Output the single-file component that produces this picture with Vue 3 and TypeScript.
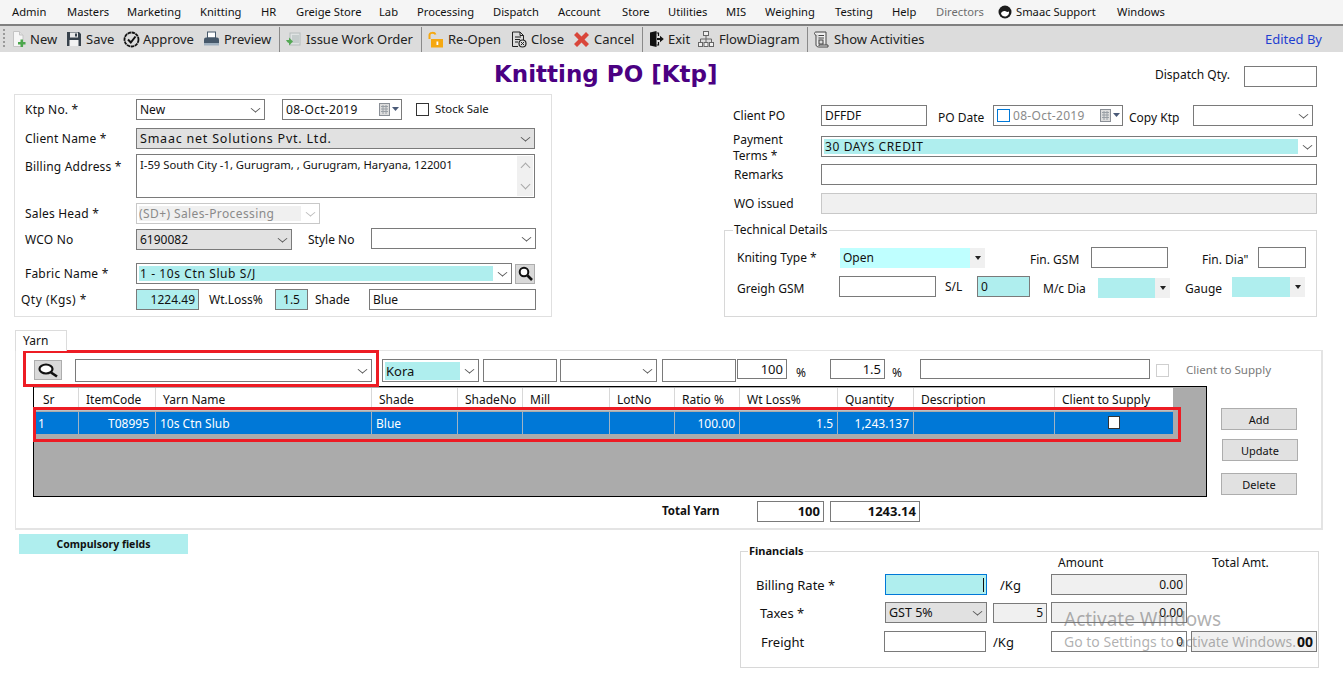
<script setup lang="ts">
const menus: { label: string; w: number; muted?: boolean }[] = [
  { label: 'Admin', w: 55 }, { label: 'Masters', w: 60 }, { label: 'Marketing', w: 73 },
  { label: 'Knitting', w: 61 }, { label: 'HR', w: 35 }, { label: 'Greige Store', w: 83 },
  { label: 'Lab', w: 38 }, { label: 'Processing', w: 76 }, { label: 'Dispatch', w: 65 },
  { label: 'Account', w: 64 }, { label: 'Store', w: 46 }, { label: 'Utilities', w: 58 },
  { label: 'MIS', w: 39 }, { label: 'Weighing', w: 70 }, { label: 'Testing', w: 57 },
  { label: 'Help', w: 44 }, { label: 'Directors', w: 62, muted: true },
]
const cols = ['Sr', 'ItemCode', 'Yarn Name', 'Shade', 'ShadeNo', 'Mill', 'LotNo', 'Ratio %', 'Wt Loss%', 'Quantity', 'Description', 'Client to Supply']
</script>

<template>
  <div class="page">
    <nav class="menubar">
      <span v-for="m in menus" :key="m.label" class="menu" :class="{ muted: m.muted }" :style="{ width: m.w + 'px' }">{{ m.label }}</span>
      <svg class="support-ico" width="14" height="14" viewBox="0 0 14 14"><circle cx="7" cy="7" r="6.500" fill="#1c1c1c"/><path d="M3 8.500C3.500 6.500 6 5.500 8 6.500C9 7 10 7 11 6.500C11.500 9 9.500 11.500 7 11.500C5 11.500 3.500 10.300 3 8.500Z" fill="#fff"/></svg>
      <span class="menu support">Smaac Support</span>
      <span class="menu">Windows</span>
    </nav>

    <div class="toolbar">
      <span class="grip"></span>
      <span class="tool t-new">
        <svg width="16" height="18" viewBox="0 0 16 18"><path d="M2.500 1.500H8.500L12 5V16.500H2.500Z" fill="#f6f6f6" stroke="#c4c4c4"/><path d="M8.500 1.500V5H12" fill="#e2e2e2" stroke="#c4c4c4"/><path d="M7 12H9.500V9.500H12V12H14.500V14.500H12V17H9.500V14.500H7Z" fill="#4ca64c"/></svg>New
      </span>
      <span class="tool t-save">
        <svg width="16" height="16" viewBox="0 0 16 16"><path d="M1 1H13L15 3V15H1Z" fill="#38424c"/><rect x="4" y="1.500" width="8" height="5" fill="#e8e8e8"/><rect x="9" y="2.500" width="2" height="3" fill="#38424c"/><rect x="3.500" y="9" width="9" height="6" fill="#f2f2f2"/></svg>Save
      </span>
      <span class="tool t-approve">
        <svg width="17" height="17" viewBox="0 0 17 17"><circle cx="8.500" cy="8.500" r="7" fill="none" stroke="#111" stroke-width="1.800" stroke-dasharray="3.500 .6"/><path d="M5 8.500L7.800 11.500L12.500 5.500" fill="none" stroke="#111" stroke-width="2"/></svg>Approve
      </span>
      <span class="tool t-preview">
        <svg width="17" height="16" viewBox="0 0 17 16"><rect x="4.500" y="1" width="8" height="6" fill="#fff" stroke="#46586a"/><path d="M1 8.500Q1 6.500 3 6.500H14Q16 6.500 16 8.500V12H1Z" fill="#46586a"/><rect x="1" y="12" width="15" height="2.500" fill="#9fb0bf"/></svg>Preview
      </span>
      <span class="sep s1"></span>
      <span class="tool t-issue">
        <svg width="17" height="17" viewBox="0 0 17 17"><rect x="5" y="2" width="10" height="12" fill="#dfe3e3" stroke="#b5bcbc"/><rect x="7" y="4" width="7" height="8" fill="#c5cccc"/><path d="M1 9H4V6.500L8 10.500L4 14.500V12C3 12 2 11 1 9Z" fill="#55a855"/></svg>Issue Work Order
      </span>
      <span class="sep s2"></span>
      <span class="tool t-open">
        <svg width="17" height="17" viewBox="0 0 17 17"><path d="M2.500 8V4C2.500 1.500 7.500 1 8.500 3.500" fill="none" stroke="#f5a811" stroke-width="2"/><rect x="4" y="8" width="12" height="8.500" fill="#f5a811"/><rect x="9.500" y="10.500" width="1.800" height="3.500" fill="#fff"/></svg>Re-Open
      </span>
      <span class="tool t-close">
        <svg width="16" height="17" viewBox="0 0 16 17"><path d="M1.500 1H9L12.500 4.500V9M7 15.500H1.500V1M9 1V4.500H12.500M4 6H10M4 8.500H9M4 11H7" fill="none" stroke="#222"/><circle cx="11.500" cy="12.500" r="3.500" fill="none" stroke="#222" stroke-width="1.200"/><path d="M10 11L13 14M13 11L10 14" stroke="#222"/></svg>Close
      </span>
      <span class="tool t-cancel">
        <svg width="17" height="17" viewBox="0 0 17 17"><path d="M1 4L4 1L8.500 5.500L13 1L16 4L11.500 8.500L16 13L13 16L8.500 11.500L4 16L1 13L5.500 8.500Z" fill="#d9463a"/></svg>Cancel
      </span>
      <span class="sep s3"></span>
      <span class="tool t-exit">
        <svg width="15" height="16" viewBox="0 0 15 16"><path d="M1 1.500L7.500 0V16L1 14.500Z" fill="#111"/><path d="M7.500 2H9.500V5M9.500 11V14H7.500" fill="none" stroke="#111" stroke-width="1.200"/><path d="M8 7H11V4.800L14.800 8L11 11.200V9H8Z" fill="#111"/></svg>Exit
      </span>
      <span class="tool t-flow">
        <svg width="16" height="16" viewBox="0 0 16 16"><g fill="#efefef" stroke="#666"><rect x="5.500" y=".5" width="5" height="4"/><rect x=".5" y="11.500" width="4" height="4"/><rect x="6" y="11.500" width="4" height="4"/><rect x="11.500" y="11.500" width="4" height="4"/><path d="M8 4.500V11.500M2.500 11.500V8H13.500V11.500" fill="none"/></g></svg>FlowDiagram
      </span>
      <span class="sep s4"></span>
      <span class="tool t-show">
        <svg width="16" height="17" viewBox="0 0 16 17"><path d="M3 1H13V14M3 1C1 1 1 4 3 4V14C3 15.500 5 16 6 16H15V14H6V15" fill="#efefef" stroke="#444"/><path d="M5.500 4.500H11M5.500 7H11" stroke="#444"/><rect x="6" y="9" width="4" height="4" fill="none" stroke="#444"/></svg>Show Activities
      </span>
      <span class="edited">Edited By</span>
    </div>

    <header class="title-row">
      <h1 class="title">Knitting PO [Ktp]</h1>
      <span class="dispatch-label">Dispatch Qty.</span>
      <div class="box dispatch-box"></div>
    </header>

    <section class="upper">
      <div class="left-panel">
        <div class="row r1">
          <label class="lbl">Ktp No. *</label>
          <div class="box sel w-new">New<i class="chev"></i></div>
          <div class="box date w-date">
            <span class="date-text">08-Oct-2019</span>
            <svg class="cal" width="20" height="13" viewBox="0 0 20 13"><rect x=".5" y=".5" width="10" height="12" fill="#ddd" stroke="#8a8f96"/><path d="M2 3.500H9M2 6H9M2 8.500H9M4 2V11M7 2V11" stroke="#9aa0a6"/><path d="M13 4H20L16.500 8Z" fill="#4a5a78"/></svg>
          </div>
          <span class="check stock-check"></span>
          <span class="stock-label">Stock Sale</span>
        </div>
        <div class="row r2">
          <label class="lbl">Client Name *</label>
          <div class="box sel gray w-full client-text">Smaac net Solutions Pvt. Ltd.<i class="chev"></i></div>
        </div>
        <div class="row r3">
          <label class="lbl">Billing Address *</label>
          <div class="box area w-full">
            <span class="area-text">I-59 South City -1, Gurugram, , Gurugram, Haryana, 122001</span>
            <span class="scroll"><i class="up"></i><i class="down"></i></span>
          </div>
        </div>
        <div class="row r4">
          <label class="lbl">Sales Head *</label>
          <div class="box sel disabled w-sales"><span class="sales-fill">(SD+) Sales-Processing</span><i class="chev light"></i></div>
        </div>
        <div class="row r5">
          <label class="lbl">WCO No</label>
          <div class="box sel gray w-wco">6190082<i class="chev"></i></div>
          <label class="style-label">Style No</label>
          <div class="box sel w-style"><i class="chev"></i></div>
        </div>
        <div class="row r6">
          <label class="lbl">Fabric Name *</label>
          <div class="box sel w-fabric"><span class="fill fabric-fill">1 - 10s Ctn Slub S/J</span><i class="chev"></i></div>
          <button class="search-btn small">
            <svg width="15" height="15" viewBox="0 0 15 15"><circle cx="6" cy="6" r="4.300" fill="#fff" stroke="#111" stroke-width="2"/><path d="M9.500 9.500L14 14" stroke="#111" stroke-width="2.600"/></svg>
          </button>
        </div>
        <div class="row r7">
          <label class="lbl qty-label">Qty (Kgs) *</label>
          <div class="box cyan num w-qty">1224.49</div>
          <label class="loss-label">Wt.Loss%</label>
          <div class="box cyan center w-loss">1.5</div>
          <label class="shade-label">Shade</label>
          <div class="box w-shade">Blue</div>
        </div>
      </div>

      <div class="right-col">
        <div class="row q1">
          <label class="rlbl">Client PO</label>
          <div class="box w-po">DFFDF</div>
          <label class="po-date">PO Date</label>
          <div class="box date w-podate">
            <span class="check blue"></span>
            <span class="date-text dim">08-Oct-2019</span>
            <svg class="cal" width="20" height="13" viewBox="0 0 20 13"><rect x=".5" y=".5" width="10" height="12" fill="#ddd" stroke="#8a8f96"/><path d="M2 3.500H9M2 6H9M2 8.500H9M4 2V11M7 2V11" stroke="#9aa0a6"/><path d="M13 4H20L16.500 8Z" fill="#4a5a78"/></svg>
          </div>
          <label class="copy-label">Copy Ktp</label>
          <div class="box sel w-copy"><i class="chev"></i></div>
        </div>
        <div class="row q2">
          <label class="rlbl two">Payment<br>Terms *</label>
          <div class="box sel w-wide"><span class="fill pay-fill">30 DAYS CREDIT</span><i class="chev"></i></div>
        </div>
        <div class="row q3">
          <label class="rlbl indent">Remarks</label>
          <div class="box w-wide"></div>
        </div>
        <div class="row q4">
          <label class="rlbl indent">WO issued</label>
          <div class="box soft w-wide"></div>
        </div>
        <div class="tech">
          <span class="legend tech-legend">Technical Details</span>
          <div class="row t1">
            <label class="tlbl">Kniting Type *</label>
            <div class="combo w-kn"><span class="kn-fill">Open</span><i class="caret"></i></div>
            <label class="fin-gsm low">Fin. GSM</label>
            <div class="box w-gsm"></div>
            <label class="fin-dia low">Fin. Dia"</label>
            <div class="box w-dia"></div>
          </div>
          <div class="row t2">
            <label class="tlbl low">Greigh GSM</label>
            <div class="box w-greigh"></div>
            <label class="sl">S/L</label>
            <div class="box cyan w-sl">0</div>
            <label class="mc low">M/c Dia</label>
            <div class="combo w-mc"><span class="aqua-fill"></span><i class="caret"></i></div>
            <label class="gauge low">Gauge</label>
            <div class="combo w-gauge"><span class="aqua-fill"></span><i class="caret"></i></div>
          </div>
        </div>
      </div>
    </section>

    <div class="tab">Yarn</div>
    <section class="yarn">
      <div class="yarn-tools">
        <button class="search-btn big">
          <svg width="22" height="15" viewBox="0 0 22 15"><ellipse cx="9" cy="6" rx="6.500" ry="4.500" fill="#fff" stroke="#111" stroke-width="2.200"/><path d="M14 9.500L20 13.500" stroke="#111" stroke-width="2.600"/></svg>
        </button>
        <div class="box sel y-name"><i class="chev"></i></div>
        <div class="box sel y-kora"><span class="fill kora-fill">Kora</span><i class="chev"></i></div>
        <div class="box y-a"></div>
        <div class="box sel y-b"><i class="chev"></i></div>
        <div class="box y-c"></div>
        <div class="box num y-d">100</div>
        <span class="pct p1">%</span>
        <div class="box num y-e">1.5</div>
        <span class="pct p2">%</span>
        <div class="box y-f"></div>
        <span class="check y-check"></span>
        <span class="y-supply">Client to Supply</span>
      </div>

      <div class="yarn-mid">
        <div class="grid">
          <div class="grid-head">
            <span v-for="c in cols" :key="c" class="th">{{ c }}</span>
          </div>
          <div class="grid-row">
            <span class="td">1</span>
            <span class="td right code">T08995</span>
            <span class="td">10s Ctn Slub</span>
            <span class="td">Blue</span>
            <span class="td"></span>
            <span class="td"></span>
            <span class="td"></span>
            <span class="td right">100.00</span>
            <span class="td right">1.5</span>
            <span class="td right">1,243.137</span>
            <span class="td"></span>
            <span class="td mid"><i class="row-check"></i></span>
          </div>
        </div>
        <div class="actions">
          <button class="btn">Add</button>
          <button class="btn update">Update</button>
          <button class="btn delete">Delete</button>
        </div>
      </div>

      <div class="totals">
        <strong class="total-label">Total Yarn</strong>
        <div class="box num bold tot-a">100</div>
        <div class="box num bold tot-b">1243.14</div>
      </div>

      <span class="red-box rb1"></span>
      <span class="red-box rb2"></span>
    </section>

    <section class="bottom">
      <div class="compulsory">Compulsory fields</div>
      <div class="fin">
        <span class="legend fin-legend">Financials</span>
        <div class="fin-head">
          <span class="amount-h">Amount</span>
          <span class="total-h">Total Amt.</span>
        </div>
        <div class="row f1">
          <label class="flbl fl-bill">Billing Rate *</label>
          <div class="box cyan focus w-rate"><i class="cursor"></i></div>
          <span class="kg k1">/Kg</span>
          <div class="box soft-dark num w-amt">0.00</div>
        </div>
        <div class="row f2">
          <label class="flbl fl-tax">Taxes *</label>
          <div class="box sel gray w-rate gst">GST 5%<i class="chev"></i></div>
          <div class="box soft-dark num w-five">5</div>
          <div class="box soft-dark num w-amt">0.00</div>
        </div>
        <div class="row f3">
          <label class="flbl fl-fr">Freight</label>
          <div class="box w-rate"></div>
          <span class="kg k3">/Kg</span>
          <div class="box num w-amt">0</div>
          <div class="box soft-dark num bold w-total">00</div>
        </div>
      </div>
    </section>

    <div class="watermark">
      <div class="wm-1">Activate Windows</div>
      <div class="wm-2">Go to Settings to activate Windows.</div>
    </div>
  </div>
</template>

<style>
html, body { margin: 0; background: #fff; overflow: hidden; }
</style>

<style scoped>
.page { position: relative; width: 1343px; height: 694px; overflow: hidden; background: #fff; color: #111; font: 12px/16px "Noto Sans", sans-serif; }
label { display: block; }
.row { display: flex; align-items: center; }
i { display: block; font-style: normal; }
.low { position: relative; top: 2px; }

/* menu */
.menubar { display: flex; align-items: center; height: 24px; padding-left: 12px; background: #f5f5f5; border-bottom: 2px solid #808080; font-size: 11.2px; }
.menu { flex: none; white-space: nowrap; color: #111; }
.menu.muted { color: #6d6d6d; }
.support-ico { margin-right: 4px; }
.support { width: 101px; }

/* toolbar */
.toolbar { display: flex; align-items: center; height: 26px; background: #dcdcdc; font-size: 13px; color: #222; }
.grip { width: 2px; height: 20px; margin-left: 3px; background: repeating-linear-gradient(#9a9a9a 0 2px, transparent 2px 4px); }
.tool { display: flex; align-items: center; gap: 4px; white-space: nowrap; }
.tool svg { flex: none; }
.sep { width: 1px; height: 25px; background: #8a8a8a; }
.t-new { margin-left: 6px; width: 55px; gap: 3px; }
.t-save { width: 57px; }
.t-approve { width: 80px; gap: 3px; }
.t-preview { width: 76px; }
.s1 { margin-right: 5px; }
.t-issue { width: 136px; }
.s2 { margin-right: 5px; }
.t-open { width: 84px; }
.t-close { width: 62px; }
.t-cancel { width: 69px; }
.s3 { margin-right: 6px; }
.t-exit { width: 49px; }
.t-flow { width: 109px; gap: 5px; }
.s4 { margin-right: 5px; }
.t-show { gap: 5px; }
.edited { margin-left: auto; margin-right: 21px; color: #1f3fd0; }

/* title */
.title-row { display: flex; align-items: flex-start; height: 42px; padding-left: 494px; }
.title { margin: 7px 0 0; width: 661px; font: bold 23px/30px "DejaVu Sans", sans-serif; color: #4b0082; white-space: nowrap; }
.dispatch-label { margin-top: 15px; width: 89px; }
.dispatch-box { margin-top: 14px; width: 73px; height: 21px; }

/* generic control */
.box { position: relative; display: flex; align-items: center; flex: none; box-sizing: border-box; height: 21px; padding: 0 3px; border: 1px solid #7a7a7a; background: #fff; white-space: nowrap; }
.sel { padding-right: 18px; }
.gray { background: #e1e1e1; }
.disabled { border-color: #c8c8c8; color: #8a8a8a; }
.cyan { background: #afeeee; }
.soft { background: #f0f0f0; border-color: #c8c8c8; }
.soft-dark { background: #f0f0f0; }
.num { justify-content: flex-end; }
.center { justify-content: center; }
.bold { font-weight: 700; }
.chev { position: absolute; right: 5px; top: 5px; width: 6px; height: 6px; border-right: 1px solid #555; border-bottom: 1px solid #555; transform: scale(1, .8) rotate(45deg); }
.chev.light { border-color: #bbb; }
.fill { display: block; height: 15px; line-height: 15px; background: #afeeee; padding: 0 1px; margin-left: -1px; }
.check { display: block; flex: none; box-sizing: border-box; width: 13px; height: 13px; border: 1px solid #333; background: #fff; }
.check.blue { border-color: #0078d7; margin-right: 3px; }
.date { padding: 0 3px; }
.date-text { letter-spacing: .3px; }
.date-text.dim { color: #8a8a8a; }
.cal { position: absolute; right: 2px; top: 3px; }
.search-btn { display: flex; align-items: center; justify-content: center; padding: 0; flex: none; box-sizing: border-box; background: #d9d9d9; border: 1px solid #adadad; }
.search-btn.small { width: 20px; height: 20px; margin-left: 3px; }
.search-btn.big { width: 28px; height: 20px; }

/* upper left panel */
.upper { display: flex; align-items: flex-start; padding-left: 14px; }
.left-panel { box-sizing: border-box; width: 538px; height: 223px; padding: 4px 0 0 10px; border: 1px solid #e0e0e0; }
.lbl { flex: none; width: 111px; letter-spacing: .2px; white-space: nowrap; }
.r1 { height: 21px; }
.r2 { height: 21px; margin-top: 8px; }
.r3 { height: 44px; margin-top: 5px; align-items: flex-start; }
.r4 { height: 21px; margin-top: 5px; }
.r5 { height: 21px; margin-top: 5px; }
.r6 { height: 21px; margin-top: 13px; }
.r7 { height: 21px; margin-top: 5px; }
.w-new { width: 129px; }
.w-date { width: 120px; margin-left: 17px; }
.stock-check { margin-left: 14px; }
.stock-label { margin-left: 6px; font-size: 11.4px; position: relative; top: -1px; }
.w-full { width: 399px; }
.client-text { font-size: 12.5px; letter-spacing: .78px; }
.area { height: 44px; align-items: flex-start; padding: 2px 3px; }
.area-text { font-size: 11.25px; }
.r3 .lbl { margin-top: 5px; }
.scroll { position: absolute; right: 1px; top: 1px; bottom: 1px; width: 16px; background: #f0f0f0; }
.up, .down { position: absolute; left: 5px; width: 6px; height: 6px; border-left: 1px solid #a8a8a8; border-top: 1px solid #a8a8a8; }
.up { top: 8px; transform: rotate(45deg); }
.down { bottom: 8px; transform: rotate(225deg); }
.w-sales { width: 184px; }
.sales-fill { display: block; height: 15px; line-height: 15px; width: 162px; margin-left: -1px; background: #f0f0f0; letter-spacing: .4px; white-space: nowrap; }
.w-wco { width: 156px; }
.style-label { margin-left: 16px; width: 63px; }
.w-style { width: 165px; margin-top: -2px; }
.w-fabric { width: 376px; }
.fabric-fill { width: 354px; letter-spacing: .6px; }
.qty-label { width: 115px; margin-left: -4px; letter-spacing: .5px; }
.w-qty { width: 63px; }
.loss-label { margin-left: 10px; width: 66px; }
.w-loss { width: 33px; }
.shade-label { margin-left: 7px; width: 54px; }
.w-shade { width: 167px; }

/* right */
.right-col { width: 593px; margin-left: 172px; }
.rlbl { flex: none; width: 97px; padding-left: 9px; box-sizing: border-box; }
.rlbl.indent { padding-left: 10px; }
.rlbl.two { line-height: 16px; position: relative; top: 1px; }
.q1 { margin-top: 11px; height: 21px; }
.q2 { margin-top: 10px; height: 21px; }
.q3 { margin-top: 7px; height: 21px; }
.q4 { margin-top: 8px; height: 21px; }
.w-po { width: 106px; }
.po-date { margin-left: 11px; width: 55px; position: relative; top: 2px; }
.w-podate { width: 130px; }
.copy-label { margin-left: 6px; width: 64px; position: relative; top: 2px; }
.w-copy { width: 120px; }
.w-wide { width: 496px; }
.pay-fill { width: 474px; letter-spacing: .6px; }
.tech { position: relative; box-sizing: border-box; height: 87px; margin-top: 16px; border: 1px solid #d8d8d8; width: 593px; padding: 16px 0 0 12px; }
.legend { position: absolute; top: -9px; background: #fff; padding: 0 1px; }
.tech-legend { left: 8px; }
.tlbl { flex: none; width: 103px; }
.t1 { height: 21px; }
.t2 { height: 21px; margin-top: 8px; }
.combo { display: flex; flex: none; height: 20px; }
.kn-fill { display: block; box-sizing: border-box; width: 130px; padding: 2px 3px; background: #bfffff; }
.aqua-fill { display: block; flex: 1; background: #afeeee; }
.caret { position: relative; width: 15px; background: #f0f0f0; }
.caret::after { content: ""; position: absolute; left: 5px; top: 8px; border: 3px solid transparent; border-top: 4px solid #222; border-bottom: 0; }
.w-kn { width: 145px; }
.fin-gsm { margin-left: 45px; width: 61px; }
.w-gsm { width: 77px; }
.fin-dia { margin-left: 34px; width: 56px; }
.w-dia { width: 48px; }
.w-greigh { width: 97px; margin-left: -1px; }
.sl { margin-left: 9px; width: 32px; }
.w-sl { width: 53px; }
.mc { margin-left: 13px; width: 55px; }
.w-mc { width: 72px; margin-top: 2px; }
.gauge { margin-left: 15px; width: 47px; }
.w-gauge { width: 73px; }

/* yarn */
.tab { box-sizing: border-box; width: 52px; height: 21px; margin: 13px 0 0 15px; padding: 2px 0 0 7px; border: 1px solid #dcdcdc; border-bottom: 0; background: #fff; position: relative; z-index: 1; }
.yarn { position: relative; box-sizing: border-box; width: 1308px; height: 180px; margin: -1px 0 0 15px; padding: 8px 0 0 18px; border: 2px solid #e4e4e4; border-width: 1px 2px 2px 1px; }
.yarn-tools { display: flex; align-items: flex-start; height: 23px; }
.yarn-tools .box { height: 23px; }
.yarn-tools .search-btn { margin-top: 1px; }
.yarn-tools .chev { top: 6px; }
.y-name { width: 297px; margin-left: 13px; }
.y-kora { width: 97px; margin-left: 10px; }
.kora-fill { width: 74px; height: 18px; line-height: 18px; font-size: 13px; }
.y-a { width: 74px; margin-left: 4px; }
.y-b { width: 97px; margin-left: 3px; }
.y-c { width: 74px; margin-left: 5px; }
.y-d { width: 50px; margin-left: 1px; height: 20px !important; font-size: 13px; }
.pct { margin-top: 6px; }
.p1 { margin-left: 9px; width: 34px; }
.y-e { width: 55px; height: 20px !important; font-size: 13px; }
.p2 { margin-left: 7px; width: 28px; }
.y-f { width: 230px; height: 20px !important; }
.y-check { margin: 5px 0 0 6px; border-color: #cfcfcf; }
.y-supply { margin: 3px 0 0 17px; color: #7a7a7a; font-size: 11.6px; }
.yarn-mid { display: flex; align-items: flex-start; margin-top: 4px; margin-left: -1px; }
.grid { box-sizing: border-box; width: 1174px; height: 111px; flex: none; padding-top: 1px; background: #ababab; border: 1px solid #000; }
.grid-head, .grid-row { display: grid; grid-template-columns: 44px 77px 216px 86px 65px 87px 65px 65px 98px 76px 141px 119px; width: 1139px; }
.grid-head { height: 22px; background: #fff; border-bottom: 1px solid #c0c0c0; }
.th { padding: 4px 0 0 7px; border-left: 1px solid #d8d8d8; color: #111; white-space: nowrap; }
.th:first-child { border-left: 0; padding-left: 9px; }
.grid-row { height: 22px; margin-top: 1px; background: #0078d7; color: #fff; }
.td { padding: 4px 4px 0 4px; border-left: 1px solid #9fb3c4; white-space: nowrap; }
.td:first-child { border-left: 0; }
.right { text-align: right; }
.code { padding-right: 6px; }
.mid { display: flex; justify-content: center; padding: 4px 0 0; }
.row-check { box-sizing: border-box; width: 12px; height: 13px; background: #fff; border: 1px solid #333; }
.actions { display: flex; flex-direction: column; align-items: flex-start; gap: 9px; margin: 22px 0 0 14px; }
.btn { width: 76px; height: 22px; padding: 0; box-sizing: border-box; border: 1px solid #adadad; background: #e1e1e1; font: 11px "Noto Sans", sans-serif; color: #111; }
.update { margin-left: 1px; }
.delete { margin-top: 3px; }
.totals { display: flex; align-items: center; margin: 4px 0 0 628px; height: 20px; }
.total-label { width: 95px; font-size: 11.5px; }
.totals .box { height: 21px; font-size: 13px; }
.tot-a { width: 67px; }
.tot-b { width: 90px; margin-left: 6px; }
.red-box { position: absolute; box-sizing: border-box; border: 3px solid #ed1c24; pointer-events: none; }
.rb1 { left: 7px; top: -1px; width: 356px; height: 37px; }
.rb2 { left: 17px; top: 56px; width: 1148px; height: 35px; }

/* bottom */
.bottom { display: flex; align-items: flex-start; margin-top: 4px; padding-left: 19px; }
.compulsory { width: 169px; height: 20px; line-height: 20px; flex: none; text-align: center; background: #afeeee; font-size: 10.5px; font-weight: 700; }
.fin { position: relative; box-sizing: border-box; width: 579px; height: 117px; margin: 17px 0 0 552px; border: 1px solid #d8d8d8; padding-left: 15px; }
.fin-legend { left: 7px; font-weight: 700; font-size: 11px; }
.fin-head { display: flex; height: 22px; padding: 3px 0 0 302px; box-sizing: border-box; }
.amount-h { width: 154px; }
.f1 { height: 21px; }
.f2 { height: 21px; margin-top: 7px; }
.f3 { height: 21px; margin-top: 8px; }
.flbl { flex: none; font-size: 13px; }
.fl-bill { width: 129px; }
.fl-tax { width: 125px; margin-left: 4px; }
.fl-fr { width: 123px; margin-left: 5px; }
.w-rate { width: 102px; }
.gst { font-size: 12.5px; }
.focus { border-color: #0078d7; width: 102px; }
.cursor { position: absolute; right: 2px; top: 3px; width: 1px; height: 14px; background: #111; }
.kg { font-size: 13px; }
.k1 { margin-left: 13px; width: 51px; }
.w-amt { width: 136px; }
.w-five { width: 54px; margin: 0 4px 0 6px; height: 20px; }
.k3 { margin-left: 7px; width: 58px; }
.w-total { width: 126px; margin-left: 4px; font-size: 14px; }

.watermark { position: absolute; left: 1064px; top: 607px; pointer-events: none; color: rgba(110, 110, 110, .55); }
.wm-1 { font: 19px/24px "Noto Sans", sans-serif; }
.wm-2 { margin-top: 1px; font: 14px/20px "Noto Sans", sans-serif; white-space: nowrap; }
</style>
